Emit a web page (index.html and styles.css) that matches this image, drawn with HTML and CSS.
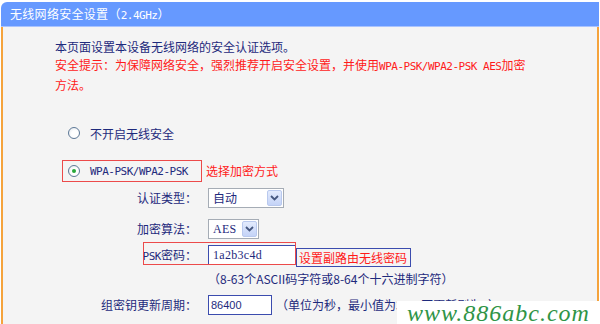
FILE: index.html
```html
<!DOCTYPE html>
<html lang="zh-CN">
<head>
    <meta charset="UTF-8">
    <meta name="viewport" content="width=device-width, initial-scale=1.0">
    <title>无线网络安全设置</title>
    <link rel="stylesheet" href="styles.css">
</head>
<body>
    <div class="panel">
        <div class="panel-title">无线网络安全设置（<span class="mono">2.4GHz</span>）</div>
        <div class="panel-body">
            <div class="intro">
                <p class="note">本页面设置本设备无线网络的安全认证选项。</p>
                <p class="warn">安全提示：为保障网络安全，强烈推荐开启安全设置，并使用<span class="mono">WPA-PSK/WPA2-PSK AES</span>加密方法。</p>
            </div>

            <div class="option first">
                <label class="radio-box"><span class="radio"></span>不开启无线安全</label>
            </div>
            <div class="option second">
                <label class="radio-box marked"><span class="radio checked"></span><span class="mono">WPA-PSK/WPA2-PSK</span></label>
                <span class="tip">选择加密方式</span>
            </div>

            <div class="fields">
                <div class="row">
                    <span class="label">认证类型：</span>
                    <div class="control">
                        <div class="select auth">
                            <span class="select-text">自动</span>
                            <span class="select-btn"><svg width="9" height="6" viewBox="0 0 9 6"><path d="M1 1 L4.5 4.5 L8 1" fill="none" stroke="#45577f" stroke-width="1.8"/></svg></span>
                        </div>
                    </div>
                </div>
                <div class="row algo">
                    <span class="label">加密算法：</span>
                    <div class="control">
                        <div class="select cipher">
                            <span class="select-text serif">AES</span>
                            <span class="select-btn"><svg width="9" height="6" viewBox="0 0 9 6"><path d="M1 1 L4.5 4.5 L8 1" fill="none" stroke="#45577f" stroke-width="1.8"/></svg></span>
                        </div>
                    </div>
                </div>
                <div class="row psk">
                    <span class="label"><span class="mono">PSK</span>密码：</span>
                    <div class="control">
                        <div class="input psk-input serif">1a2b3c4d</div>
                        <span class="tip boxed">设置副路由无线密码</span>
                    </div>
                    <div class="mark"></div>
                </div>
                <div class="row hint">
                    <span class="label"></span>
                    <span class="hint-text">（8-63个ASCII码字符或8-64个十六进制字符）</span>
                </div>
                <div class="row period">
                    <span class="label">组密钥更新周期：</span>
                    <div class="control">
                        <div class="input period-input">86400</div>
                        <span class="unit">（单位为秒，最小值为30，不更新则为0）</span>
                    </div>
                </div>
            </div>
        </div>
    </div>
    <div class="watermark">www.886abc.com</div>
</body>
</html>
```

FILE: styles.css
```css
body {
    margin: 0;
    width: 600px;
    height: 324px;
    overflow: hidden;
    background: #ffffff;
    font-family: "Noto Sans CJK SC", "Liberation Sans", sans-serif;
    font-size: 12px;
    color: #1e2a7c;
    position: relative;
}

p {
    margin: 0;
}

.mono {
    font-family: "DejaVu Sans Mono", "Noto Sans CJK SC", monospace;
    font-size: 11px;
    letter-spacing: -0.5px;
}

.serif {
    font-family: "Liberation Serif", serif;
    font-size: 12px;
    letter-spacing: 0.3px;
}

.panel {
    margin: 2px 1px 0 1px;
}

.panel-title {
    height: 24px;
    line-height: 24px;
    padding-left: 9px;
    background: #6699ff;
    border-top-left-radius: 6px;
    border-bottom: 1px solid #a9c3ff;
    color: #ffffff;
    letter-spacing: 0.3px;
}

.panel-title .mono {
    font-size: 11px;
    letter-spacing: -0.5px;
}

.panel-body {
    height: 300px;
    background: #f4f4f4;
    border-left: 2px solid #f5a33c;
    border-right: 2px solid #f5a33c;
}

.intro {
    padding: 11px 0 0 52px;
    width: 476px;
    line-height: 18px;
}

.warn {
    color: #ff1a1a;
}

.option {
    display: flex;
    align-items: center;
    margin-left: 59px;
}

.option.first {
    margin-top: 28px;
}

.option.second {
    margin-top: 16px;
}

.radio-box {
    display: flex;
    align-items: center;
    gap: 10px;
    width: 133px;
    height: 20px;
    padding-left: 5px;
    border: 1px solid transparent;
}

.radio-box.marked {
    border-color: #ec4a4a;
}

.radio {
    width: 10px;
    height: 10px;
    border: 1px solid #5d7896;
    border-radius: 50%;
    background: radial-gradient(circle at 60% 60%, #ffffff 40%, #dfe4ea 100%);
    display: flex;
    align-items: center;
    justify-content: center;
    flex: none;
}

.radio.checked::after {
    content: "";
    width: 4px;
    height: 4px;
    border-radius: 50%;
    background: #28a83a;
}

.tip {
    color: #ff1a1a;
    margin-left: 4px;
    line-height: 20px;
}

.fields {
    margin-top: 6px;
}

.row {
    display: grid;
    grid-template-columns: 194px auto;
    column-gap: 11px;
    height: 20px;
    line-height: 20px;
    position: relative;
}

.row.algo {
    margin-top: 11px;
}

.row.psk {
    margin-top: 6px;
}

.row.hint {
    margin-top: 7px;
    height: 14px;
    line-height: 14px;
}

.row.period {
    margin-top: 9px;
}

.label {
    text-align: right;
}

.control {
    display: flex;
    align-items: flex-start;
}

.select {
    display: flex;
    justify-content: space-between;
    height: 18px;
    padding: 0 1px 0 4px;
    background: #ffffff;
    border: 1px solid #a5acb5;
}

.select.auth {
    width: 69px;
}

.select.cipher {
    width: 44px;
}

.select-text {
    line-height: 18px;
}

.select-btn {
    width: 15px;
    height: 16px;
    margin-top: 1px;
    display: flex;
    align-items: center;
    justify-content: center;
    background: linear-gradient(#e3ebfd, #c4d3f7);
    border: 1px solid #b9c9ee;
    box-sizing: border-box;
    border-radius: 2px;
}

.input {
    height: 20px;
    line-height: 19px;
    padding-left: 4px;
    background: #ffffff;
    border: 1px solid #3b4cae;
    box-sizing: border-box;
}

.psk-input {
    width: 88px;
}

.period-input {
    width: 64px;
    padding-left: 2px;
    font-family: "Liberation Sans", sans-serif;
    font-size: 11px;
}

.tip.boxed {
    margin: 3px 0 0 0;
    padding: 0 3px 0 2px;
    height: 17px;
    line-height: 17px;
    border: 1px solid #3b4cae;
}

.mark {
    position: absolute;
    left: 140px;
    top: -3px;
    width: 151px;
    height: 21px;
    border: 1px solid #ec4a4a;
}

.hint-text {
    grid-column: 2;
}

.unit {
    margin-left: 4px;
}

.watermark {
    position: absolute;
    left: 397px;
    top: 301px;
    width: 203px;
    height: 23px;
    background: #ffffff;
    color: #2f9446;
    font-family: "Liberation Serif", serif;
    font-style: italic;
    font-size: 24px;
    line-height: 24px;
    letter-spacing: 1px;
    padding-left: 10px;
    box-sizing: border-box;
    white-space: nowrap;
}
```
